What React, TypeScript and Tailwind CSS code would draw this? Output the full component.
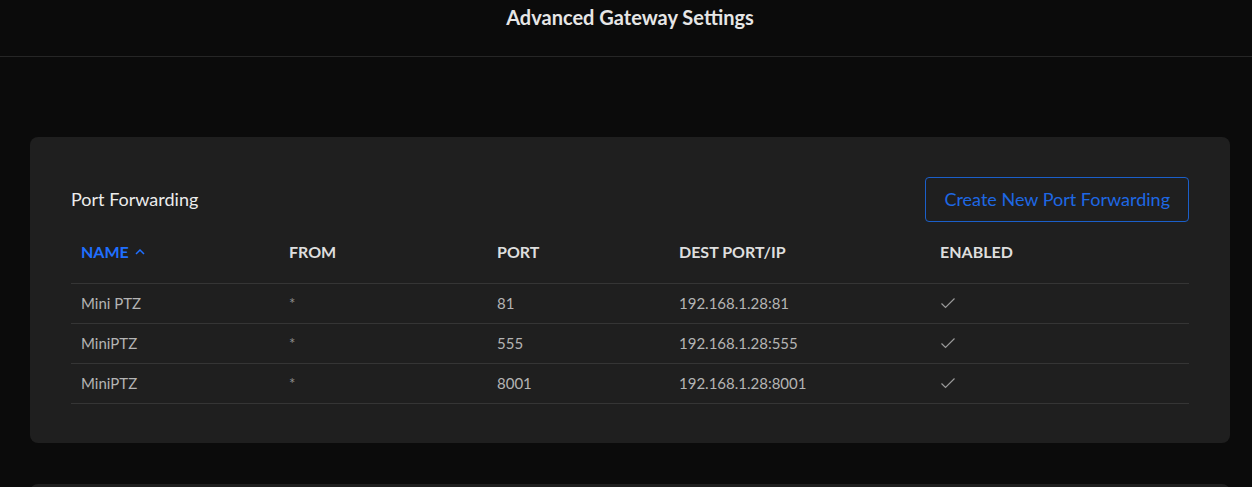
import React from 'react';

type Rule = {
  name: string;
  from: string;
  port: string;
  dest: string;
  enabled: boolean;
};

const rules: Rule[] = [
  { name: 'Mini PTZ', from: '*', port: '81', dest: '192.168.1.28:81', enabled: true },
  { name: 'MiniPTZ', from: '*', port: '555', dest: '192.168.1.28:555', enabled: true },
  { name: 'MiniPTZ', from: '*', port: '8001', dest: '192.168.1.28:8001', enabled: true },
];

const Check = () => (
  <svg width="16" height="12" viewBox="0 0 16 12" fill="none" stroke="#9a9a9a" strokeWidth="1.2">
    <path d="M1.5 6.5 L5.5 10.5 L14.5 1.5" />
  </svg>
);

const App: React.FC = () => {
  return (
    <div className="min-h-[487px] bg-[#0b0b0b] font-['Lato','Open_Sans',sans-serif] overflow-hidden">
      <header className="h-[57px] border-b border-[#262626] flex justify-center pt-[2px] pl-[8px]">
        <h1 className="text-[20px] font-bold text-[#e6e6e6]">Advanced Gateway Settings</h1>
      </header>

      <div className="pl-[30px] pr-[22px] pt-[80px] flex flex-col gap-[41px]">
        <section className="bg-[#1f1f1f] rounded-lg px-[41px] pt-[40px] pb-[39px]">
          <div className="flex justify-between items-center">
            <h2 className="text-[18px] text-[#ececec]">Port Forwarding</h2>
            <button className="h-[45px] px-[18px] border border-[#1b5fc9] rounded-[4px] text-[18px] text-[#1e68e4]">
              Create New Port Forwarding
            </button>
          </div>

          <table className="w-full border-collapse text-[15px]">
            <thead>
              <tr className="h-[61px] border-b border-[#353535] text-left text-[16px]">
                <th className="w-[208px] pl-[10px] font-bold text-[#1f6fff]">
                  <span className="inline-flex items-center gap-[6px]">
                    NAME
                    <svg width="10" height="6" viewBox="0 0 10 6" fill="none" stroke="#1f6fff" strokeWidth="1.5">
                      <path d="M1 5 L5 1 L9 5" />
                    </svg>
                  </span>
                </th>
                <th className="w-[208px] pl-[10px] font-bold text-[#dedede]">FROM</th>
                <th className="w-[182px] pl-[10px] font-bold text-[#dedede]">PORT</th>
                <th className="w-[261px] pl-[10px] font-bold text-[#dedede]">DEST PORT/IP</th>
                <th className="pl-[10px] font-bold text-[#dedede]">ENABLED</th>
              </tr>
            </thead>
            <tbody>
              {rules.map((r, i) => (
                <tr key={i} className="h-[40px] border-b border-[#353535] text-[#b4b4b4]">
                  <td className="pl-[10px]">{r.name}</td>
                  <td className="pl-[10px] text-[#8f8f8f]">{r.from}</td>
                  <td className="pl-[10px]">{r.port}</td>
                  <td className="pl-[10px]">{r.dest}</td>
                  <td className="pl-[10px]">{r.enabled && <Check />}</td>
                </tr>
              ))}
            </tbody>
          </table>
        </section>

        <section className="bg-[#1f1f1f] rounded-lg h-[200px]" />
      </div>
    </div>
  );
};

export default App;
